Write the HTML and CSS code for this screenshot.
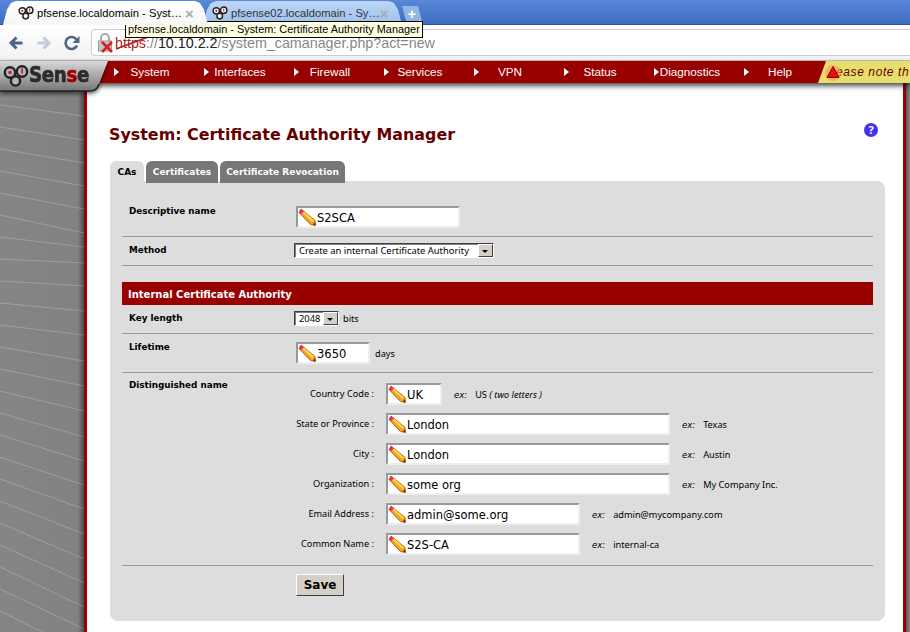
FILE: index.html
```html
<!DOCTYPE html>
<html lang="en">
<head>
    <meta charset="UTF-8">
    <meta name="viewport" content="width=device-width, initial-scale=1.0">
    <title>pfSense - System: Certificate Authority Manager</title>
    <link rel="stylesheet" href="styles.css">
</head>
<body>

    <svg class="defs" width="0" height="0">
        <symbol id="pencil" viewBox="0 0 18 18">
            <path d="M3 1 L17 12.5 L17.5 17.5 L12.5 16.5 L1 4.5 Z" fill="#f7a21e" stroke="#b8651b" stroke-width="1"/>
            <path d="M6 3.5 L16 12.5 L14.5 14 L4.5 5 Z" fill="#fdd84f"/>
            <path d="M3 1 L5.8 3.3 L3.2 6.2 L1 4.5 Z" fill="#ee2a6a"/>
            <path d="M14.5 16.8 L17.5 17.5 L17 14.2 Z" fill="#6b3a12"/>
        </symbol>
        <symbol id="pflogo" viewBox="0 0 26 22">
            <circle cx="7" cy="7.5" r="5.2" fill="var(--ring-fill, #fff)" stroke="#222" stroke-width="2.4"/>
            <circle cx="19" cy="6.5" r="5.2" fill="var(--ring-fill, #fff)" stroke="#222" stroke-width="2.4"/>
            <circle cx="12.5" cy="16" r="4.6" fill="var(--ring-fill, #fff)" stroke="#222" stroke-width="2.4"/>
            <circle cx="7" cy="7.5" r="1.8" fill="#c22"/>
            <rect x="18.2" y="3.5" width="1.8" height="5" fill="#c22"/>
        </symbol>
    </svg>

    <div class="tabstrip">
        <div class="tab tab-active">
            <svg class="favicon"><use href="#pflogo"/></svg>
            <span class="tab-title">pfsense.localdomain - Syst…</span>
            <span class="tab-close">×</span>
        </div>
        <div class="tab tab-other">
            <svg class="favicon"><use href="#pflogo"/></svg>
            <span class="tab-title">pfsense02.localdomain - Sy…</span>
            <span class="tab-close">×</span>
        </div>
        <div class="newtab">+</div>
    </div>

    <div class="toolbar">
        <svg class="tool-icon" width="16" height="16" viewBox="0 0 16 16"><path d="M14.5 8 H4 M8.5 2.5 L3 8 L8.5 13.5" fill="none" stroke="#4c6485" stroke-width="3"/></svg>
        <svg class="tool-icon" width="16" height="16" viewBox="0 0 16 16"><path d="M1.5 8 H12 M7.5 2.5 L13 8 L7.5 13.5" fill="none" stroke="#c3ccd8" stroke-width="3"/></svg>
        <svg class="tool-icon" width="16" height="16" viewBox="0 0 16 16"><path d="M13 10.5 A6 6 0 1 1 12.5 4.5" fill="none" stroke="#4c6485" stroke-width="2.6"/><path d="M15.5 1 V8 H8.5 Z" fill="#4c6485"/></svg>
        <div class="omnibox">
            <svg class="lock" width="16" height="20" viewBox="0 0 16 20">
                <path d="M3 8 V5 A4 4 0 0 1 11 5 V8" fill="none" stroke="#aaa" stroke-width="2"/>
                <rect x="0.5" y="8" width="13" height="10" fill="#c4c4c4" stroke="#999"/>
                <path d="M4 9 L14 19 M14 9 L4 19" stroke="#d81e1e" stroke-width="2.6"/>
            </svg>
            <span class="url"><span class="url-scheme">https</span>://<span class="url-host">10.10.2.2</span>/system_camanager.php?act=new</span>
            <svg class="strike" width="34" height="14" viewBox="0 0 34 14"><path d="M1 13 L33 1" stroke="#b01c1c" stroke-width="1.4"/></svg>
        </div>
        <div class="tooltip">pfsense.localdomain - System: Certificate Authority Manager</div>
    </div>

    <div class="navbar">
        <div class="logo">
            <svg class="logo-shape" width="116" height="36" viewBox="0 0 116 36">
                <defs>
                    <linearGradient id="logoFill" x1="0" y1="0" x2="0" y2="1">
                        <stop offset="0" stop-color="#d8d8d8"/>
                        <stop offset="1" stop-color="#777"/>
                    </linearGradient>
                </defs>
                <path d="M0 0 H108 L99 23 Q97 30 90 30 H0 Z" fill="url(#logoFill)"/>
                <path d="M0 30 H90 Q97 30 99 23" fill="none" stroke="#222" stroke-width="1.5"/>
            </svg>
            <svg class="logo-mark"><use href="#pflogo"/></svg>
            <span class="logo-text">Sen<b>s</b>e</span>
        </div>
        <ul class="menu">
            <li>System</li>
            <li>Interfaces</li>
            <li>Firewall</li>
            <li>Services</li>
            <li>VPN</li>
            <li>Status</li>
            <li>Diagnostics</li>
            <li>Help</li>
        </ul>
        <div class="notice">
            <svg class="notice-icon" width="18" height="18" viewBox="0 0 18 18"><circle cx="9" cy="10" r="8" fill="#ff9a50" opacity="0.6"/><path d="M9 3.5 L15 14.5 H3 Z" fill="#dd1111" stroke="#8a0000"/></svg>
            <span class="notice-text">ease note th</span>
        </div>
    </div>

    <div class="main">
        <div class="sidebar">
            <svg width="84" height="549" viewBox="0 0 84 549">
                <path d="M0 0l84 10M0 22l84 11M0 44l84 13M0 66l84 14M0 88l84 15M0 110l84 16M0 132l84 18M0 154l84 10M0 176l84 4M0 198l84 5M0 220l84 8M0 242l84 10M0 264l84 14M0 286l84 17M0 308l84 20M0 330l84 24M0 352l84 26M0 374l84 28M0 396l84 30M0 418l84 33M0 440l84 36M0 462l84 38M0 484l84 40M0 506l84 40M0 528l84 42" fill="none" stroke="#fff" stroke-opacity="0.22"/>
            </svg>
        </div>

        <div class="content">
            <div class="title-row">
                <h1>System: Certificate Authority Manager</h1>
                <span class="help">?</span>
            </div>

            <div class="tabs">
                <a class="pane-tab pane-tab-active">CAs</a>
                <a class="pane-tab">Certificates</a>
                <a class="pane-tab">Certificate Revocation</a>
            </div>

            <div class="panel">
                <div class="row row-tall">
                    <div class="row-label">Descriptive name</div>
                    <div class="row-value">
                        <div class="field w-164"><svg class="pencil"><use href="#pencil"/></svg>S2SCA</div>
                    </div>
                </div>
                <div class="row">
                    <div class="row-label">Method</div>
                    <div class="row-value">
                        <div class="select w-200"><span class="select-text">Create an internal Certificate Authority</span><span class="select-btn"></span></div>
                    </div>
                </div>

                <div class="section">Internal Certificate Authority</div>

                <div class="row">
                    <div class="row-label">Key length</div>
                    <div class="row-value">
                        <div class="select w-45"><span class="select-text">2048</span><span class="select-btn"></span></div>
                        <span class="unit-bits">bits</span>
                    </div>
                </div>
                <div class="row row-tall">
                    <div class="row-label">Lifetime</div>
                    <div class="row-value">
                        <div class="field w-74"><svg class="pencil"><use href="#pencil"/></svg>3650</div>
                        <span class="unit">days</span>
                    </div>
                </div>
                <div class="row row-dn">
                    <div class="row-label">Distinguished name</div>
                    <div class="dn-list">
                        <div class="dn-row">
                            <span class="dn-label">Country Code :</span>
                            <div class="field w-56"><svg class="pencil"><use href="#pencil"/></svg>UK</div>
                            <span class="hint"><em class="ex">ex:</em>US <em class="note">( two letters )</em></span>
                        </div>
                        <div class="dn-row">
                            <span class="dn-label">State or Province :</span>
                            <div class="field w-284"><svg class="pencil"><use href="#pencil"/></svg>London</div>
                            <span class="hint"><em class="ex">ex:</em>Texas</span>
                        </div>
                        <div class="dn-row">
                            <span class="dn-label">City :</span>
                            <div class="field w-284"><svg class="pencil"><use href="#pencil"/></svg>London</div>
                            <span class="hint"><em class="ex">ex:</em>Austin</span>
                        </div>
                        <div class="dn-row">
                            <span class="dn-label">Organization :</span>
                            <div class="field w-284"><svg class="pencil"><use href="#pencil"/></svg>some org</div>
                            <span class="hint"><em class="ex">ex:</em>My Company Inc.</span>
                        </div>
                        <div class="dn-row">
                            <span class="dn-label">Email Address :</span>
                            <div class="field w-194"><svg class="pencil"><use href="#pencil"/></svg>admin@some.org</div>
                            <span class="hint"><em class="ex">ex:</em>admin@mycompany.com</span>
                        </div>
                        <div class="dn-row">
                            <span class="dn-label">Common Name :</span>
                            <div class="field w-194"><svg class="pencil"><use href="#pencil"/></svg>S2S-CA</div>
                            <span class="hint"><em class="ex">ex:</em>internal-ca</span>
                        </div>
                    </div>
                </div>
                <div class="save-row">
                    <button class="button">Save</button>
                </div>
            </div>
        </div>

        <div class="right-edge"></div>
    </div>

</body>
</html>
```

FILE: styles.css
```css
body {
    margin: 0;
    width: 910px;
    height: 632px;
    overflow: hidden;
    background-color: #fff;
    font-family: "Noto Sans", sans-serif;
    font-size: 9.2px;
    color: #000;
}

.defs {
    display: block;
}

/* browser chrome */
.tabstrip {
    display: flex;
    align-items: flex-end;
    height: 24px;
    padding-left: 3px;
    background: linear-gradient(#5a88d8, #3e6cc0);
    border-bottom: 1px solid #2e5596;
    font-family: "Liberation Sans", sans-serif;
    font-size: 11.2px;
}

.tab {
    display: flex;
    align-items: center;
    height: 24px;
    margin-bottom: -1px;
    box-sizing: border-box;
    background: linear-gradient(#bcd6f5, #9dc0ec);
    clip-path: polygon(0 100%, 4px 35%, 8px 8%, 13px 0, calc(100% - 13px) 0, calc(100% - 8px) 8%, calc(100% - 4px) 35%, 100% 100%);
    color: #333;
}

.tab-active {
    position: relative;
    z-index: 1;
    width: 205px;
    margin-right: -5px;
    padding-left: 15px;
    background: linear-gradient(#fff, #f6f6f6);
    color: #000;
}

.tab-other {
    width: 199px;
    padding-left: 9px;
}

.favicon {
    width: 16px;
    height: 14px;
    margin-right: 3px;
    flex: none;
}

.tab-title {
    flex: 1;
    white-space: nowrap;
}

.tab-close {
    width: 10px;
    margin-right: 13px;
    font-size: 15px;
    color: #aaa;
    font-weight: bold;
}

.newtab {
    width: 20px;
    height: 15px;
    margin: 0 0 3px 0;
    background-color: #93b5e6;
    clip-path: polygon(0 0, 80% 0, 100% 100%, 20% 100%);
    color: #fff;
    font-size: 15px;
    font-weight: bold;
    line-height: 15px;
    text-align: center;
}

.toolbar {
    position: relative;
    display: flex;
    align-items: center;
    height: 36px;
    padding-left: 8px;
    background: linear-gradient(#fff, #f1f1f1);
    border-bottom: 1px solid #c8c8c8;
    box-sizing: border-box;
}

.tool-icon {
    margin-right: 12px;
}

.omnibox {
    position: relative;
    display: flex;
    align-items: center;
    flex: 1;
    height: 25px;
    margin-left: -1px;
    padding-left: 6px;
    background-color: #fff;
    border: 1px solid #ccc;
    border-right: none;
    border-radius: 4px 0 0 4px;
    font-family: "Liberation Sans", sans-serif;
    font-size: 14.3px;
    color: #888;
}

.lock {
    margin-right: 1px;
}

.url-scheme {
    color: #b01c1c;
}

.url-host {
    color: #222;
}

.strike {
    position: absolute;
    left: 23px;
    top: 6px;
}

.tooltip {
    position: absolute;
    left: 125px;
    top: -4px;
    width: 292px;
    padding: 0 2px;
    background-color: #ffffe1;
    border: 1px solid #000;
    font-family: "Liberation Sans", sans-serif;
    font-size: 10.9px;
    line-height: 15px;
    white-space: nowrap;
}

/* pfsense header */
.navbar {
    position: relative;
    z-index: 2;
    display: flex;
    height: 22px;
    background-color: #990000;
    box-shadow: 0 3px 5px rgba(0, 0, 0, 0.7);
    font-family: "Liberation Sans", sans-serif;
    font-size: 11.7px;
    color: #fff;
}

.logo {
    position: absolute;
    left: 0;
    top: 0;
    width: 116px;
    height: 36px;
    filter: drop-shadow(0 2px 2px rgba(0, 0, 0, 0.6));
}

.logo-shape {
    display: block;
}

.logo-mark {
    --ring-fill: #b5b5b5;
    position: absolute;
    left: 3px;
    top: 4px;
    width: 26px;
    height: 22px;
}

.logo-text {
    position: absolute;
    left: 29px;
    top: 1px;
    font-family: "DejaVu Sans", sans-serif;
    font-size: 22px;
    font-weight: bold;
    line-height: 26px;
    letter-spacing: -0.4px;
    color: #2b2b2b;
    -webkit-text-stroke: 0.7px #2b2b2b;
    transform: scaleX(0.83);
    transform-origin: left;
}

.logo-text b {
    color: #a00000;
    -webkit-text-stroke-color: #a00000;
}

.menu {
    display: flex;
    margin: 0 0 0 105px;
    padding: 0;
    list-style: none;
}

.menu li {
    display: grid;
    grid-template-columns: 14px 1fr 14px;
    align-items: center;
    width: 90px;
    height: 21px;
    text-align: center;
    white-space: nowrap;
}

.menu li::before {
    content: "";
    justify-self: end;
    border-left: 5px solid #fff;
    border-top: 4px solid transparent;
    border-bottom: 4px solid transparent;
}

.notice {
    display: flex;
    align-items: center;
    flex: 1;
    margin-left: -7px;
    padding-left: 4px;
    overflow: hidden;
    background-color: #e6df6c;
    clip-path: polygon(8px 0, 100% 0, 100% 100%, 0 100%);
    color: #660000;
    font-style: italic;
    font-size: 12px;
    white-space: nowrap;
}

.notice-icon {
    position: relative;
    z-index: 1;
    flex: none;
    margin-left: 2px;
}

.notice-text {
    margin: 0 0 1px -6px;
    letter-spacing: 0.6px;
}

/* page body */
.main {
    display: flex;
    height: 549px;
}

.sidebar {
    width: 84px;
    flex: none;
    background: linear-gradient(to right, #858585 0, #828282 78px, #4a4a4a 84px);
    border-right: 3px solid #990000;
}

.sidebar svg {
    display: block;
}

.content {
    flex: 1;
    padding: 41px 0 0 22px;
}

.right-edge {
    width: 4px;
    flex: none;
    background: linear-gradient(to right, #555, #888);
    border-left: 3px solid #990000;
}

.title-row {
    display: flex;
    justify-content: space-between;
    margin-bottom: 15px;
    padding-right: 25px;
}

h1 {
    margin: 0;
    font-family: "DejaVu Sans", sans-serif;
    font-size: 15.9px;
    line-height: 22px;
    color: #660000;
}

.help {
    width: 14px;
    height: 14px;
    margin-top: -1px;
    background-color: #4433ee;
    border-radius: 50%;
    color: #fff;
    font-size: 11px;
    font-weight: bold;
    line-height: 14px;
    text-align: center;
}

.tabs {
    display: grid;
    grid-template-columns: 34px 72px 125px;
    gap: 2px;
    height: 20px;
    margin-left: 1px;
}

.pane-tab {
    background-color: #777;
    border-radius: 6px 6px 0 0;
    color: #fff;
    font-family: "DejaVu Sans", sans-serif;
    font-size: 9px;
    font-weight: bold;
    line-height: 22px;
    text-align: center;
}

.pane-tab-active {
    background-color: #ddd;
    color: #000;
}

.panel {
    width: 751px;
    margin-left: 1px;
    padding: 17px 12px 25px;
    background-color: #ddd;
    border-radius: 0 8px 8px 8px;
}

.row {
    display: flex;
    padding: 6px 0 7px;
    border-bottom: 1px solid #999;
}

.row-tall {
    padding: 8px 0;
}

.row-dn {
    padding: 7px 0 10px;
}

.row-label {
    width: 165px;
    flex: none;
    margin-top: 2px;
    padding-left: 7px;
    font-family: "DejaVu Sans", sans-serif;
    font-size: 8.8px;
    font-weight: bold;
    line-height: 11px;
}

.row-tall .row-label {
    margin-top: 0;
}

.row-dn .row-label {
    margin-top: 0;
}

.row-value {
    display: flex;
    align-items: center;
}

.row-tall .row-value {
    margin-left: 2px;
}

.section {
    margin-top: 16px;
    padding: 2px 0 0 6px;
    background-color: #990000;
    color: #fff;
    font-family: "DejaVu Sans", sans-serif;
    font-size: 10px;
    font-weight: bold;
    line-height: 21px;
}

.field {
    display: flex;
    align-items: center;
    flex: none;
    height: 22px;
    box-sizing: border-box;
    padding-top: 1px;
    background-color: #fff;
    border: 2px solid #eee;
    border-top-color: #999;
    border-left-color: #999;
    font-family: "DejaVu Sans", sans-serif;
    font-size: 11.5px;
}

.pencil {
    width: 18px;
    height: 18px;
    margin-top: -1px;
    margin-right: 1px;
    flex: none;
}

.w-56 { width: 56px; }
.w-74 { width: 74px; }
.w-164 { width: 164px; }
.w-194 { width: 194px; }
.w-284 { width: 284px; }
.w-45 { width: 45px; }
.w-200 { width: 200px; }

.select {
    display: flex;
    justify-content: space-between;
    height: 15px;
    box-sizing: border-box;
    background-color: #fff;
    border: 1px solid #404040;
    border-right-color: #fff;
    border-bottom-color: #fff;
    box-shadow: inset 1px 1px 0 #808080;
    font-size: 9.4px;
    line-height: 14px;
    white-space: nowrap;
}

.select-text {
    padding-left: 4px;
}

.select-btn {
    position: relative;
    width: 15px;
    flex: none;
    background-color: #d4d0c8;
    border: 1px solid #404040;
    border-top-color: #fff;
    border-left-color: #fff;
    box-sizing: border-box;
}

.select-btn::after {
    content: "";
    position: absolute;
    left: 3px;
    top: 5px;
    border-top: 3px solid #000;
    border-left: 3px solid transparent;
    border-right: 3px solid transparent;
}

.unit {
    margin-left: 5px;
}

.unit-bits {
    margin-left: 4px;
}

.dn-list {
    display: flex;
    flex-direction: column;
    gap: 8px;
    margin-top: 3px;
}

.dn-row {
    display: flex;
    align-items: center;
}

.dn-label {
    width: 80px;
    margin: 0 12px 2px 0;
    text-align: right;
    white-space: nowrap;
}

.hint {
    margin: 1px 0 0 12px;
    white-space: nowrap;
}

.ex {
    margin-right: 8px;
    font-family: "DejaVu Sans", sans-serif;
    font-size: 8.5px;
}

.note {
    font-size: 9.2px;
}

.save-row {
    padding: 8px 0 0 174px;
}

.button {
    display: block;
    width: 48px;
    height: 22px;
    padding: 0;
    background-color: #d4d0c8;
    border: 1px solid #404040;
    border-top-color: #fff;
    border-left-color: #fff;
    font-family: "DejaVu Sans", sans-serif;
    font-size: 12px;
    font-weight: bold;
    cursor: pointer;
}
```
